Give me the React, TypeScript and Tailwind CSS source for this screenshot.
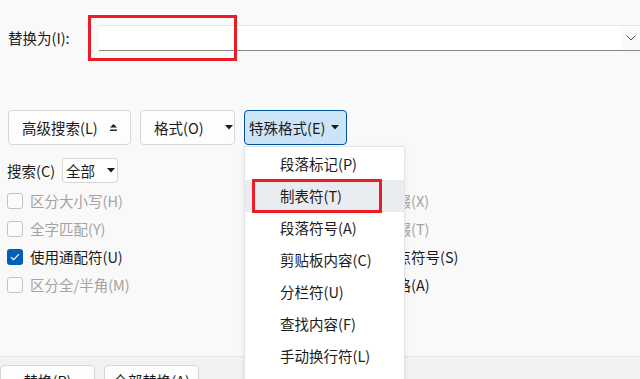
import React from 'react'

const font = { fontFamily: '"Noto Sans CJK SC", "Noto Sans", sans-serif' }

const Caret = () => (
  <svg width="8" height="5" viewBox="0 0 8 5" className="shrink-0">
    <path d="M0 0h8L4 4.5z" fill="#1b1b1b" />
  </svg>
)

const Expand = () => (
  <svg width="7" height="8" viewBox="0 0 7 8" className="shrink-0">
    <path d="M3.5 0L7 3.6H0z" fill="#1b1b1b" />
    <rect x="0" y="5.5" width="7" height="1.4" fill="#1b1b1b" />
  </svg>
)

const Check = ({ checked, label, disabled }: { checked?: boolean; label: string; disabled?: boolean }) => (
  <div className="h-[28px] flex items-center gap-[7px]">
    {checked ? (
      <div className="w-[16px] h-[16px] rounded-[3px] bg-[#005fb8] flex items-center justify-center">
        <svg width="10" height="8" viewBox="0 0 10 8">
          <path d="M1 4.2l2.6 2.5L9 1.2" fill="none" stroke="white" strokeWidth="1.2" />
        </svg>
      </div>
    ) : (
      <div className="w-[16px] h-[16px] rounded-[3px] border border-[#c4c4c4] bg-[#fbfbfb]" />
    )}
    <span className={disabled ? 'text-[#a3a3a3]' : 'text-[#1b1b1b]'}>{label}</span>
  </div>
)

const menuItems = ['段落标记(P)', '制表符(T)', '段落符号(A)', '剪贴板内容(C)', '分栏符(U)', '查找内容(F)', '手动换行符(L)', '分页符(K)']

export default function App() {
  return (
    <div className="relative w-[640px] h-[379px] overflow-hidden bg-[#f9f9f9] text-[14.5px] text-[#1b1b1b]" style={font}>
      {/* Replace with */}
      <div className="pt-[25px] flex items-center">
        <label className="w-[99px] pl-[8px]">替换为(I):</label>
        <div className="flex-1 h-[26px] bg-white border-t border-[#e5e5e5] border-b border-b-[#868686] flex items-center justify-end">
          <div className="w-[19px] h-full bg-[#fafafa] flex items-center justify-center">
            <svg width="10" height="6" viewBox="0 0 10 6">
              <path d="M0.5 0.5L5 5l4.5-4.5" fill="none" stroke="#555" strokeWidth="1" />
            </svg>
          </div>
        </div>
      </div>

      {/* Buttons */}
      <div className="mt-[59px] pl-[8px] flex gap-[9px]">
        <button className="w-[123px] h-[35px] rounded-[4px] border border-[#d6d6d6] bg-[#fdfdfd] flex items-center pl-[13px] gap-[12px]">
          <span>高级搜索(L)</span>
          <Expand />
        </button>
        <button className="w-[95px] h-[35px] rounded-[4px] border border-[#d6d6d6] bg-[#fdfdfd] flex items-center pl-[13px] gap-[21px]">
          <span>格式(O)</span>
          <Caret />
        </button>
        <button className="w-[103px] h-[35px] rounded-[4px] border border-[#005499] bg-[#cce4f7] flex items-center pl-[4px] gap-[6px]">
          <span>特殊格式(E)</span>
          <Caret />
        </button>
      </div>

      {/* Search scope */}
      <div className="mt-[13px] pl-[7px] flex items-center gap-[7px]">
        <span>搜索(C)</span>
        <div className="w-[56px] h-[25px] rounded-[4px] border border-[#d6d6d6] bg-white flex items-center pl-[3px] gap-[12px]">
          <span>全部</span>
          <Caret />
        </div>
      </div>

      {/* Options */}
      <div className="mt-[4px] pl-[7px] grid grid-cols-[323px_1fr]">
        <div className="flex flex-col">
          <Check label="区分大小写(H)" disabled />
          <Check label="全字匹配(Y)" disabled />
          <Check label="使用通配符(U)" checked />
          <Check label="区分全/半角(M)" disabled />
        </div>
        <div className="flex flex-col">
          <Check label="区分前缀(X)" disabled />
          <Check label="区分后缀(T)" disabled />
          <Check label="忽略标点符号(S)" />
          <Check label="忽略空格(A)" />
        </div>
      </div>

      {/* Bottom bar */}
      <div className="absolute left-0 right-0 top-[356px] bottom-0 border-t border-[#e3e3e3] bg-[#f2f2f2] flex gap-[9px] pt-[8px]">
        <button className="w-[95px] h-[32px] rounded-[4px] border border-[#d6d6d6] bg-[#fdfdfd] flex items-center justify-center">替换(R)</button>
        <button className="w-[95px] h-[32px] rounded-[4px] border border-[#d6d6d6] bg-[#fdfdfd] flex items-center justify-center">全部替换(A)</button>
      </div>

      {/* Special format menu */}
      <div className="absolute left-[244px] top-[146px] w-[161px] h-[260px] bg-white border border-[#e3e3e3] shadow-[0_2px_6px_rgba(0,0,0,0.08)] pt-[1px]">
        {menuItems.map((item, i) => (
          <div key={item} className={`h-[32px] flex items-center pl-[35px] ${i === 1 ? 'bg-[#e9ecf0]' : ''}`}>
            {item}
          </div>
        ))}
      </div>

      {/* Annotations */}
      <div className="absolute left-[88px] top-[15px] w-[149px] h-[46px] border-[3px] border-[#ec1c24]" />
      <div className="absolute left-[252px] top-[179px] w-[130px] h-[34px] border-[3px] border-[#ec1c24]" />
    </div>
  )
}
